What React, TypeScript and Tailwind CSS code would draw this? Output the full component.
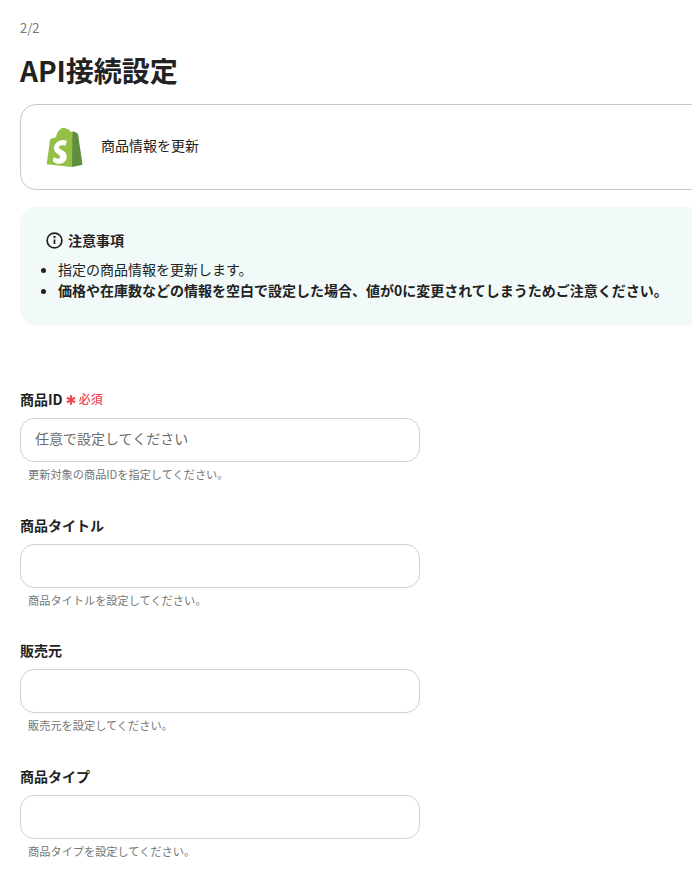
import React from 'react';

interface FieldProps {
  label: string;
  help: string;
  placeholder?: string;
  required?: boolean;
}

const ShopifyLogo = () => (
  <svg width="37" height="40" viewBox="0 0 37 40" className="shrink-0">
    <path d="M26.500 4.600 24.400 5.200C23.700 3.200 22.600 2 21 2c-.2 0-.4 0-.6.1C19.700 1.200 18.800.8 18 .8c-5 .1-7.400 6.300-8.100 9.500L5.300 11.700c-1.100.4-1.100.4-1.300 1.400C3.900 13.900.8 37.300.8 37.300L26 40 30 14 26.500 4.600Z" fill="#95bf47" />
    <path d="M27.800 4.500c-.2 0-1.300.3-1.300.3L26 40l10.600-2.300S32.100 7.300 32 6.900c-.1-.3-.3-.5-.6-.5-.2 0-3.100-1.900-3.600-1.900Z" fill="#5e8e3e" />
    <path d="M21 13.800 19.300 19s-1.700-.8-3.600-.7c-2.700.2-2.700 1.800-2.700 2.300.1 2.300 7.300 2.800 7.700 8.200.3 4.600-2.500 7.700-6.500 7.900-4.800.3-7.400-2.500-7.400-2.500l1-4.300s2.600 1.900 4.700 1.800c1.200-.1 1.700-1.100 1.600-1.800-.2-3-5.800-2.900-6.100-7.800-.3-4.400 2.800-8.800 9-9.200 2.500-.1 3.900.9 3.900.9Z" fill="#ffffff" />
    <path d="M12 11c.6-3.500 2.800-7.700 5.800-8.300M16.500 9.800c.4-2.700 2-6.200 4-7M22 8.300c.1-2-.2-4.500-1.200-5.800M24.300 7.500c-.1-1-.2-2-.6-3" fill="none" stroke="#95bf47" strokeWidth="1.300" />
  </svg>
);

const Field: React.FC<FieldProps> = ({ label, help, placeholder, required }) => (
  <div className="mb-[32.67px]">
    <div className="flex items-center h-[20px] mb-[9px]">
      <span className="text-[14px] font-bold text-[#222222] leading-[20px]">{label}</span>
      {required && (
        <span className="flex items-center ml-[3px] text-[12px] font-medium text-[#ef4756] leading-[20px]">
          <svg width="10" height="10" viewBox="0 0 10 10" stroke="#ef4756" strokeWidth="2.200" className="mr-[3px] mt-[2px]">
            <path d="M5 .3v9.400M.9 2.600l8.200 4.800M9.100 2.600l-8.200 4.800" />
          </svg>
          必須
        </span>
      )}
    </div>
    <div className="w-[400px] h-[44px] rounded-[14px] border border-[#ccd0d8] bg-white flex items-center px-[14px] pb-[4px] text-[14px] text-[#6b6b6b]">
      {placeholder}
    </div>
    <div className="pl-[8px] mt-[4px] text-[11.2px] leading-[16px] text-[#757575]">{help}</div>
  </div>
);

export default function App() {
  return (
    <div
      className="w-[692px] h-[873px] overflow-hidden bg-white px-[20px] pt-[18px] text-[#222222]"
      style={{ fontFamily: '"Noto Sans CJK JP", "Noto Sans", sans-serif' }}
    >
      <div className="text-[13px] leading-[20px] text-[#757575]">2/2</div>
      <h1 className="mt-[12px] text-[28px] font-bold leading-[40px] text-[#222222]">API接続設定</h1>

      <div className="mt-[14px] w-[760px] h-[86px] rounded-[16px] border border-[#c8c8c8] flex items-center pl-[25px] gap-[18px]">
        <ShopifyLogo />
        <span className="text-[14px] text-[#222222] pb-[4px]">商品情報を更新</span>
      </div>

      <div className="mt-[17px] w-[760px] h-[118px] rounded-[16px] bg-[#f1faf8] pt-[23px] pl-[18px]">
        <div className="flex items-center gap-[5px] pl-[8px] h-[20px]">
          <svg width="17" height="17" viewBox="0 0 17 17" fill="none" stroke="#222222" strokeWidth="1.700">
            <circle cx="8.500" cy="8.500" r="7.400" />
            <path d="M8.500 7.500v4.500" />
            <circle cx="8.500" cy="5" r=".4" fill="#222222" />
          </svg>
          <span className="text-[14px] font-bold">注意事項</span>
        </div>
        <ul className="mt-[9px] list-disc pl-[20px] text-[14px] leading-[21px]">
          <li>指定の商品情報を更新します。</li>
          <li className="font-bold">価格や在庫数などの情報を空白で設定した場合、値が0に変更されてしまうためご注意ください。</li>
        </ul>
      </div>

      <div className="mt-[64px]">
        <Field label="商品ID" required placeholder="任意で設定してください" help="更新対象の商品IDを指定してください。" />
        <Field label="商品タイトル" help="商品タイトルを設定してください。" />
        <Field label="販売元" help="販売元を設定してください。" />
        <Field label="商品タイプ" help="商品タイプを設定してください。" />
      </div>
    </div>
  );
}
